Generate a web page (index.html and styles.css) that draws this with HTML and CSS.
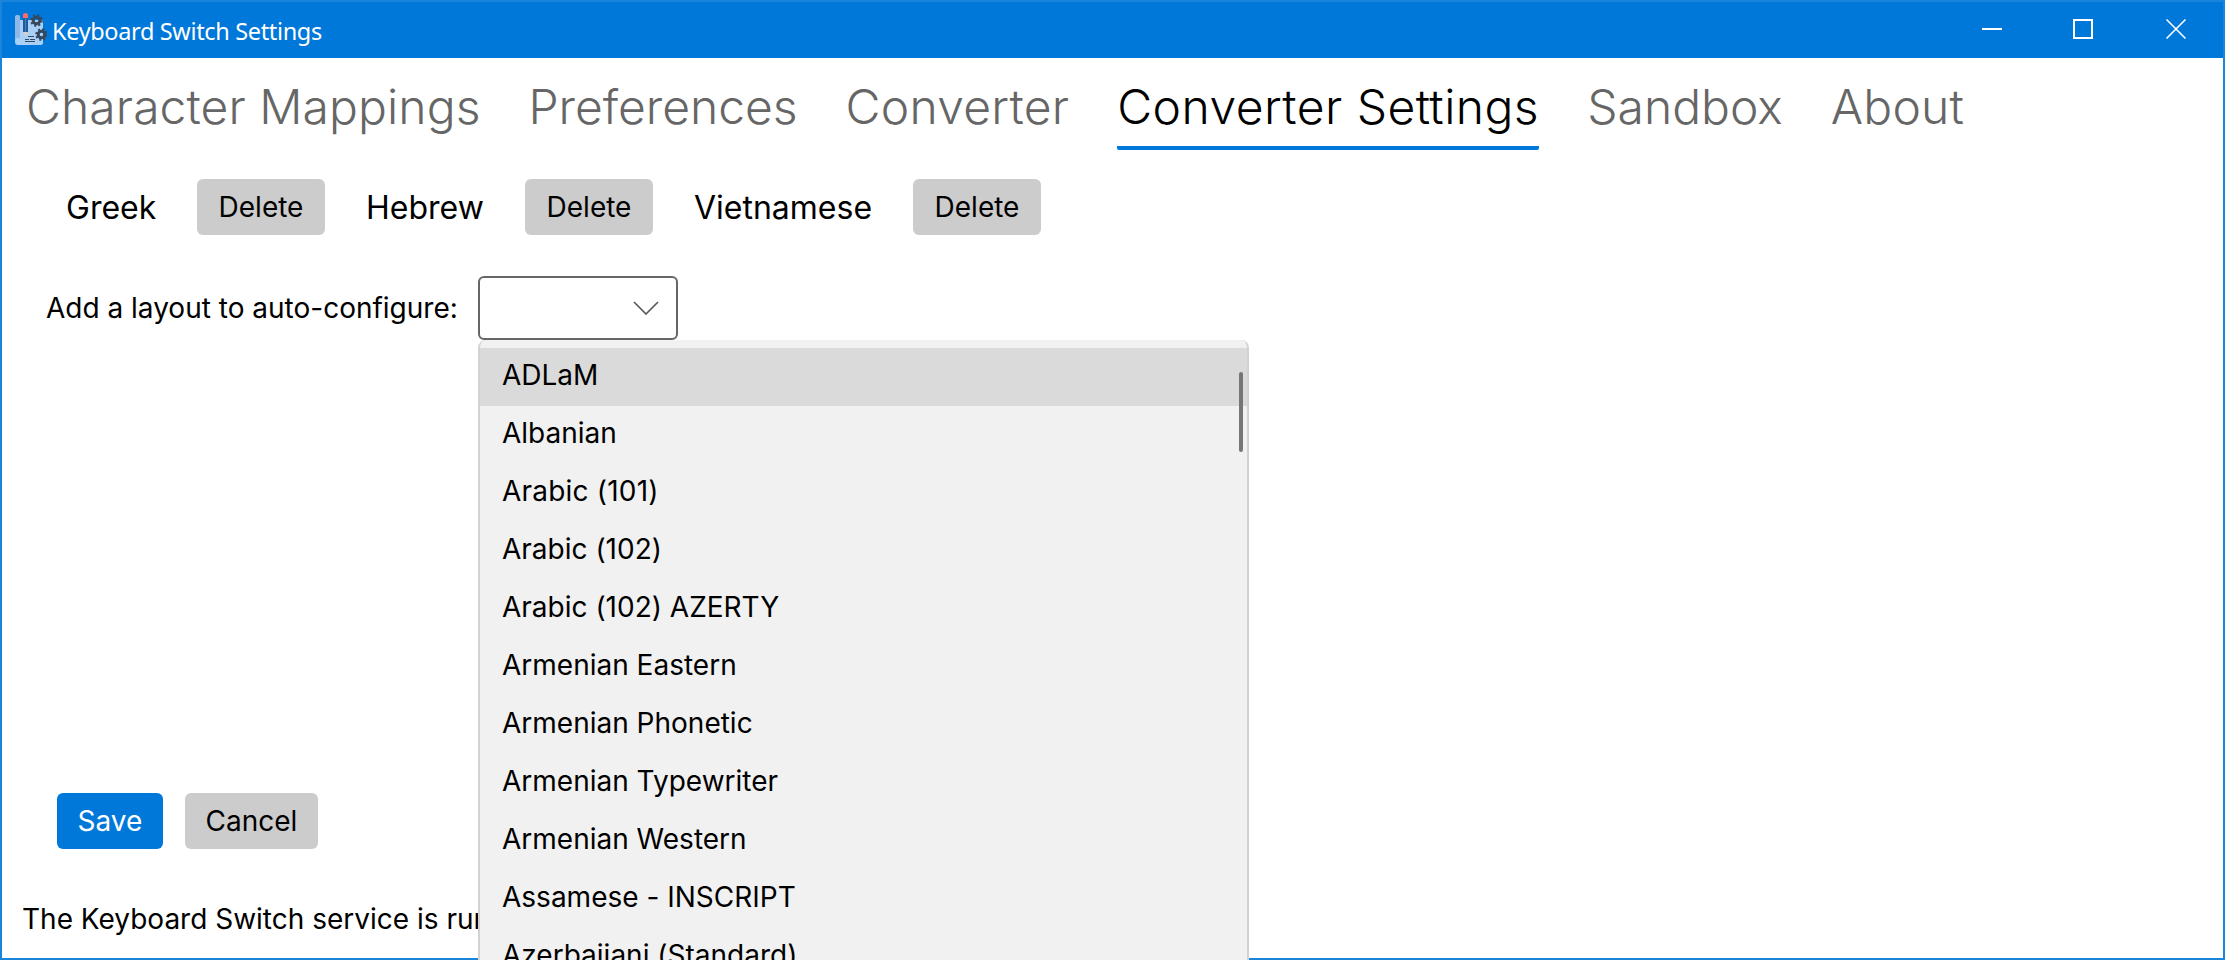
FILE: index.html
```html
<!DOCTYPE html>
<html lang="en">
<head>
<meta charset="utf-8">
<title>Keyboard Switch Settings</title>
<link rel="stylesheet" href="styles.css">
</head>
<body>
<div class="window">
  <header class="titlebar">
    <svg class="app-icon" viewBox="0 0 32 32" width="32" height="32">
      <path fill="#a9d1f7" d="M5 7h21q2 0 2 2v21q0 2-2 2H3q-3 0-3-3V5q0-3 2.500-3T5 5z"/>
      <path fill="#8fb8e6" d="M0 27V5q0-3 2.500-3T5 5v20H3q-3 0-3 3z"/>
      <path fill="#215d9c" d="M8 5h5v14H8z"/>
      <path fill="#4980bd" d="M10 5h1v14h-1z"/>
      <path fill="#ff6b6b" d="M8 5V2q0-2 2.500-2T13 2v3z"/>
      <path fill="#d8cfc8" d="M8 19h5l-2.500 4.500z"/>
      <path stroke="#35495e" stroke-width="1" d="M13 23.500h6M10 26.500h4m1 0h5M10 28.500h10"/>
      <g fill="#35495e" stroke="#35495e">
        <circle cx="21.500" cy="7.500" r="3.300" fill="none" stroke-width="3"/>
        <circle cx="21.500" cy="7.500" r="5.400" fill="none" stroke-width="1.800" stroke-dasharray="2.100 2.140"/>
        <circle cx="26.500" cy="21.500" r="3.300" fill="none" stroke-width="3"/>
        <circle cx="26.500" cy="21.500" r="5.400" fill="none" stroke-width="1.800" stroke-dasharray="2.100 2.140"/>
      </g>
    </svg>
    <span class="title">Keyboard Switch Settings</span>
    <svg class="controls" viewBox="0 0 210 24" width="210" height="24" fill="none" stroke="#fff">
      <path stroke-width="2" d="M0 12h20M92 3h18v18H92z"/>
      <path stroke-width="1.600" d="M184.500 2.500l19 19M203.500 2.500l-19 19"/>
    </svg>
  </header>

  <nav class="tabs">
    <span class="tab t1">Character Mappings</span>
    <span class="tab t2">Preferences</span>
    <span class="tab t3">Converter</span>
    <span class="tab t4 active">Converter Settings</span>
    <span class="tab t5">Sandbox</span>
    <span class="tab t6">About</span>
  </nav>

  <main class="content">
    <div class="layouts">
      <span class="layout l1">Greek</span><button class="button delete">Delete</button>
      <span class="layout l2">Hebrew</span><button class="button delete">Delete</button>
      <span class="layout l3">Vietnamese</span><button class="button delete">Delete</button>
    </div>
    <div class="add-row">
      <span class="add-label">Add a layout to auto-configure:</span>
      <div class="combo">
        <svg class="chevron" viewBox="0 0 26 14" width="26" height="14" fill="none" stroke="#555" stroke-width="1.600"><path d="M1 1l12 12L25 1"/></svg>
        <div class="popup">
          <ul class="options">
            <li class="option selected">ADLaM</li>
            <li class="option">Albanian</li>
            <li class="option numbered">Arabic (101)</li>
            <li class="option">Arabic (102)</li>
            <li class="option">Arabic (102) AZERTY</li>
            <li class="option">Armenian Eastern</li>
            <li class="option">Armenian Phonetic</li>
            <li class="option">Armenian Typewriter</li>
            <li class="option">Armenian Western</li>
            <li class="option">Assamese - INSCRIPT</li>
            <li class="option">Azerbaijani (Standard)</li>
          </ul>
          <div class="thumb"></div>
        </div>
      </div>
    </div>
  </main>

  <div class="actions">
    <button class="button save">Save</button>
    <button class="button cancel">Cancel</button>
  </div>
  <footer class="status">The Keyboard Switch service is running</footer>
</div>
</body>
</html>
```

FILE: styles.css
```css
* { box-sizing: border-box; }
body { margin: 0; overflow: hidden; }
.window {
  position: relative;
  display: flex;
  flex-direction: column;
  width: 2225px;
  height: 960px;
  border: 2px solid #1a84da;
  background: #fff;
  color: #000;
  font: 400 28px/34px Inter, sans-serif;
  font-feature-settings: "calt" 0;
  white-space: nowrap;
}
.titlebar {
  display: flex;
  flex: none;
  height: 56px;
  align-items: flex-start;
  background: #0078d9;
  color: #fff;
}
.app-icon { flex: none; margin: 11px 0 0 13px; }
.title {
  margin: 11px 0 0 5px;
  font: 400 23.5px/36px "Noto Sans", sans-serif;
  letter-spacing: -0.35px;
}
.controls { flex: none; margin: 15px 31px 0 auto; }
.tabs {
  display: flex;
  flex: none;
  height: 92px;
  padding: 18px 0 0 24px;
  gap: 48px;
  font-size: 48px;
  font-weight: 300;
  line-height: 61px;
  color: #666;
}
.tab { flex: none; height: 74px; }
.t1 { letter-spacing: 0.08px; }
.t2 { letter-spacing: -0.05px; }
.t3 { letter-spacing: 0.25px; }
.t4 { width: 422px; letter-spacing: 0.45px; }
.t6 { letter-spacing: 0.2px; }
.tab.active { color: #000; border-bottom: 4px solid #0078d9; border-radius: 2px; }
.content { flex: 1; padding-top: 29px; }
.layouts { display: flex; align-items: center; height: 56px; padding-left: 64px; }
.layout { flex: none; font-size: 32px; line-height: 57px; }
.l1 { width: 131px; }
.l2 { width: 159px; margin-left: 1px; }
.l3 { width: 219px; margin-left: 1px; }
.layouts .delete { margin-right: 40px; }
.button {
  flex: none;
  height: 56px;
  padding: 0;
  border: 0;
  border-radius: 6px;
  background: #ccc;
  color: #000;
  font: inherit;
  text-align: center;
}
.delete { width: 128px; }
.add-row { display: flex; align-items: center; height: 64px; margin-top: 41px; padding-left: 44px; }
.add-label { width: 432px; }
.combo {
  position: relative;
  width: 200px;
  height: 64px;
  border: 2px solid #666;
  border-radius: 6px;
}
.chevron { display: block; margin: 23px 0 0 153px; }
.popup {
  position: absolute;
  z-index: 2;
  left: -2px;
  top: 62px;
  width: 771px;
  height: 620px;
  overflow: hidden;
  border: 2px solid #d2d2d2;
  border-top: 0;
  border-bottom: 0;
  border-radius: 8px 8px 0 0;
  background: #f1f1f1;
}
.options { margin: 0; padding: 8px 0 0; list-style: none; }
.option { height: 58px; padding-left: 22px; line-height: 55px; }
.option.numbered { letter-spacing: 0.2px; }
.selected { background: #dadada; }
.thumb {
  position: absolute;
  right: 4px;
  top: 32px;
  width: 4px;
  height: 80px;
  border-radius: 2px;
  background: #767676;
}
.actions { display: flex; flex: none; height: 56px; gap: 22px; padding-left: 55px; margin-bottom: 52px; }
.save { width: 106px; background: #0078d9; color: #fff; }
.cancel { width: 133px; }
.status { flex: none; height: 57px; padding-left: 20px; line-height: 37px; }
```
